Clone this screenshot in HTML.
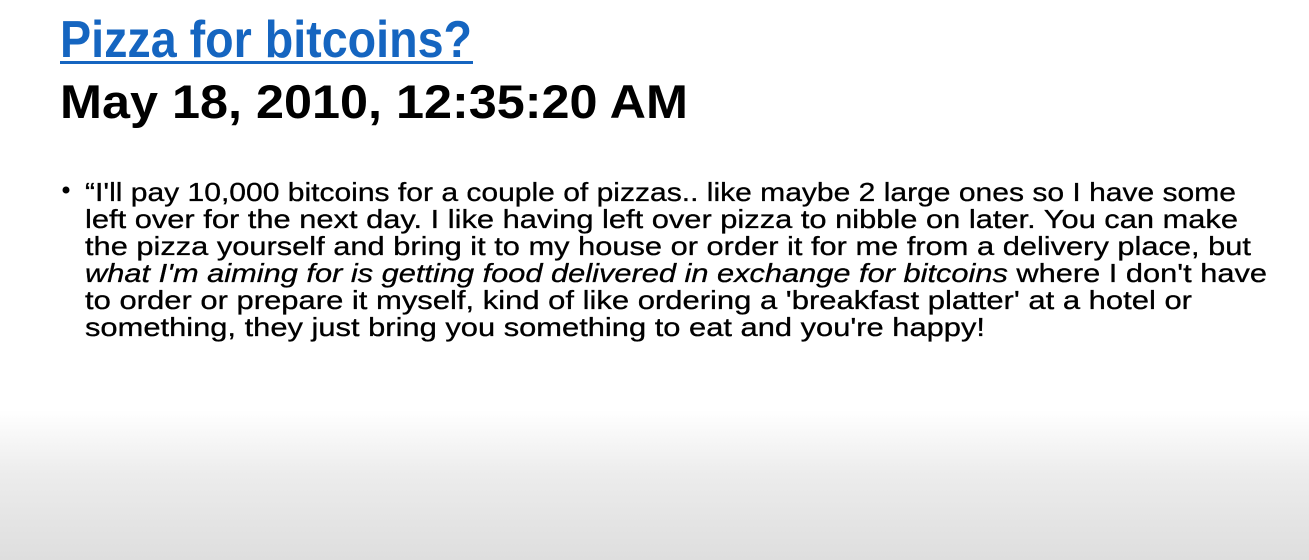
<!DOCTYPE html>
<html><head><meta charset="utf-8"><style>
html,body{margin:0;padding:0}
body{width:1309px;height:560px;overflow:hidden;background:linear-gradient(to bottom,#fff 0px,#fff 410px,#ececec 475px,#dedede 560px)}
svg{position:absolute;left:0;top:0}
text{font-family:"Liberation Sans",sans-serif}
</style></head><body>
<svg width="1309" height="560" viewBox="0 0 1309 560">
<text x="60" y="57" font-size="52" font-weight="bold" fill="#1565c0" textLength="412" lengthAdjust="spacingAndGlyphs">Pizza for bitcoins?</text>
<rect x="60" y="61" width="413" height="3" fill="#1565c0"/>
<text x="60" y="118" font-size="47" font-weight="bold" fill="#000" textLength="628" lengthAdjust="spacingAndGlyphs">May 18, 2010, 12:35:20 AM</text>
<circle cx="66" cy="190" r="3.5" fill="#000"/>
<g font-size="26" fill="#000" stroke="#000" stroke-width="0.3">
<text x="85" y="201" textLength="1151" lengthAdjust="spacingAndGlyphs">“I'll pay 10,000 bitcoins for a couple of pizzas.. like maybe 2 large ones so I have some</text>
<text x="85" y="228" textLength="1153" lengthAdjust="spacingAndGlyphs">left over for the next day.  I like having left over pizza to nibble on later.  You can make</text>
<text x="85" y="255" textLength="1166" lengthAdjust="spacingAndGlyphs">the pizza yourself and bring it to my house or order it for me from a delivery place, but</text>
<text x="85" y="282" textLength="1182" lengthAdjust="spacingAndGlyphs"><tspan font-style="italic">what I'm aiming for is getting food delivered in exchange for bitcoins</tspan> where I don't have</text>
<text x="85" y="309" textLength="1107" lengthAdjust="spacingAndGlyphs">to order or prepare it myself, kind of like ordering a 'breakfast platter' at a hotel or</text>
<text x="85" y="336" textLength="900" lengthAdjust="spacingAndGlyphs">something, they just bring you something to eat and you're happy!</text>
</g>
</svg>
</body></html>
